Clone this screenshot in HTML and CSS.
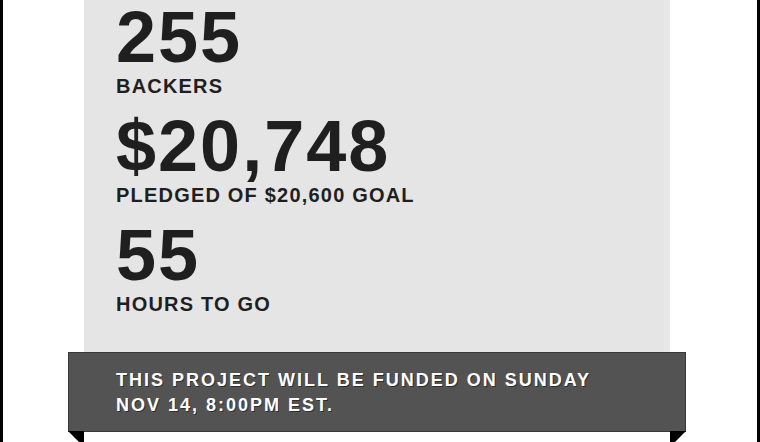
FILE: index.html
```html
<!DOCTYPE html>
<html lang="en">
<head>
  <meta charset="UTF-8" />
  <meta name="viewport" content="width=device-width, initial-scale=1.0" />
  <title>Project Stats</title>
  <link rel="stylesheet" href="styles.css">
</head>
<body>
  <div class="page">
    <section class="stats">
      <div class="stat">
        <div class="num">255</div>
        <div class="label">Backers</div>
      </div>
      <div class="stat">
        <div class="num">$20,748</div>
        <div class="label">Pledged of $20,600 goal</div>
      </div>
      <div class="stat">
        <div class="num">55</div>
        <div class="label">Hours to go</div>
      </div>
    </section>
    <div class="ribbon">
      <p>This project will be funded on Sunday<br>Nov 14, 8:00PM EST.</p>
    </div>
    <div class="below"></div>
  </div>
</body>
</html>
```

FILE: styles.css
```css
/* Reset & Base */
* { margin: 0; padding: 0; box-sizing: border-box; }
html, body { height: 100%; overflow: hidden; }
body { font-family: "Liberation Sans", Arial, sans-serif; background: #fff; color: #1f1f1f; }

/* Frame */
.page { min-height: 100vh; border-left: 3px solid #000; border-right: 3px solid #000; padding: 0 87px 0 81px; }

/* Stats panel */
.stats { background: #e5e5e5; padding: 5px 32px 37px; display: flex; flex-direction: column; gap: 17px; box-shadow: inset -6px 0 0 #e8e8e8; }
.stat .num { font-size: 72px; line-height: 64px; font-weight: bold; letter-spacing: 2px; }
.stat .label { margin-top: 6px; font-size: 20px; line-height: 22px; font-weight: bold; letter-spacing: 1.2px; text-transform: uppercase; }

/* Ribbon */
.ribbon { position: relative; margin: 0 -16px; background: #535353; border: 1px solid #383838; padding: 15px 47px 13px; }
.ribbon p { color: #fff; font-size: 18px; line-height: 25px; font-weight: bold; letter-spacing: 2px; text-transform: uppercase; text-shadow: 1px 1px 0 rgba(0,0,0,0.45); }
.ribbon::before,
.ribbon::after { content: ""; position: absolute; top: 100%; width: 0; height: 0; border-top: 16px solid #000; }
.ribbon::before { left: -1px; border-left: 16px solid transparent; }
.ribbon::after { right: -1px; border-right: 16px solid transparent; }

.below { height: 80px; background: #fff; }
```
